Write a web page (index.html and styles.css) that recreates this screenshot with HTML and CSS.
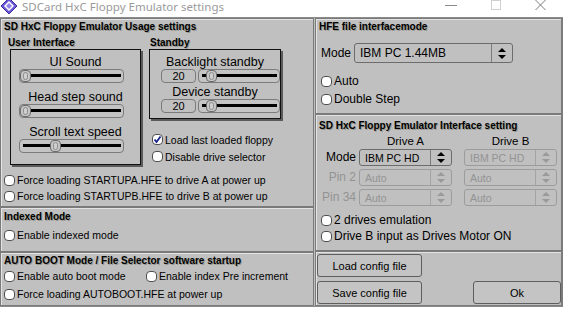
FILE: index.html
```html
<!DOCTYPE html>
<html lang="en">
<head>
    <meta charset="UTF-8">
    <title>SDCard HxC Floppy Emulator settings</title>
    <link rel="stylesheet" href="styles.css">
</head>
<body>
    <div class="titlebar">
        <svg class="appicon" width="16" height="16" viewBox="0 0 16 16">
            <polygon points="8,0 16,8 8,16 0,8" fill="#6a58d8" stroke="#3b2c9c" stroke-width="1"/>
            <polygon points="8,3 13,8 8,13 3,8" fill="#fff"/>
            <polygon points="8,5 11,8 8,11 5,8" fill="#8f82ea"/>
        </svg>
        <span class="wintitle">SDCard HxC Floppy Emulator settings</span>
        <div class="winbtns">
            <svg width="12" height="10" viewBox="0 0 12 10"><line x1="0" y1="5.5" x2="12" y2="5.5" stroke="#8a8a8a"/></svg>
            <svg width="10" height="10" viewBox="0 0 10 10"><rect x="0.5" y="0.5" width="9" height="9" fill="none" stroke="#d0d0d0"/></svg>
            <svg width="11" height="10" viewBox="0 0 11 10"><path d="M0.5 0 L10.5 10 M10.5 0 L0.5 10" stroke="#7a7a7a"/></svg>
        </div>
    </div>

    <div class="client">
        <div class="col col-left">
            <section class="panel p-usage">
                <h2 class="plabel">SD HxC Floppy Emulator Usage settings</h2>
                <div class="usage-row">
                    <div class="group ui-group">
                        <h3 class="glabel">User Interface</h3>
                        <div class="shadowbox uibox">
                            <div class="slabel">UI Sound</div>
                            <div class="slider ui-slider"><i class="knob" style="left:0px"></i></div>
                            <div class="slabel">Head step sound</div>
                            <div class="slider ui-slider"><i class="knob" style="left:0px"></i></div>
                            <div class="slabel">Scroll text speed</div>
                            <div class="slider ui-slider"><i class="knob" style="left:30px"></i></div>
                        </div>
                    </div>
                    <div class="group sb-group">
                        <h3 class="glabel">Standby</h3>
                        <div class="shadowbox sbbox">
                            <div class="slabel">Backlight standby</div>
                            <div class="numrow">
                                <span class="num">20</span>
                                <div class="slider sb-slider"><i class="knob" style="left:7px"></i></div>
                            </div>
                            <div class="slabel">Device standby</div>
                            <div class="numrow">
                                <span class="num">20</span>
                                <div class="slider sb-slider"><i class="knob" style="left:7px"></i></div>
                            </div>
                        </div>
                        <div class="sb-checks">
                            <label class="chk"><span class="box on"><svg width="9" height="9" viewBox="0 0 9 9"><path d="M1.5 4.5 L3.5 7 L7.5 1.5" fill="none" stroke="#16238a" stroke-width="1.8"/></svg></span>Load last loaded floppy</label>
                            <label class="chk"><span class="box"></span>Disable drive selector</label>
                        </div>
                    </div>
                </div>
                <div class="force-checks">
                    <label class="chk"><span class="box"></span>Force loading STARTUPA.HFE to drive A at power up</label>
                    <label class="chk"><span class="box"></span>Force loading STARTUPB.HFE to drive B at power up</label>
                </div>
            </section>

            <section class="panel p-indexed">
                <h2 class="plabel">Indexed Mode</h2>
                <label class="chk"><span class="box"></span>Enable indexed mode</label>
            </section>

            <section class="panel p-autoboot">
                <h2 class="plabel">AUTO BOOT Mode / File Selector software startup</h2>
                <div class="chkrow">
                    <label class="chk autoboot"><span class="box"></span>Enable auto boot mode</label>
                    <label class="chk"><span class="box"></span>Enable index Pre increment</label>
                </div>
                <label class="chk chk-tall"><span class="box"></span>Force loading AUTOBOOT.HFE at power up</label>
            </section>
        </div>

        <div class="col col-right">
            <section class="panel p-hfe">
                <h2 class="plabel">HFE file interfacemode</h2>
                <div class="moderow">
                    <span class="mlabel">Mode</span>
                    <div class="choice hfe-choice">
                        <span class="cv">IBM PC 1.44MB</span>
                        <span class="ca"><svg width="8" height="11" viewBox="0 0 8 11"><path d="M4 0 L8 4 L0 4 Z M0 7 L8 7 L4 11 Z" fill="#000"/></svg></span>
                    </div>
                </div>
                <div class="hfe-checks">
                    <label class="chk"><span class="box"></span>Auto</label>
                    <label class="chk"><span class="box"></span>Double Step</label>
                </div>
            </section>

            <section class="panel p-iface">
                <h2 class="plabel">SD HxC Floppy Emulator Interface setting</h2>
                <div class="drivegrid">
                    <span></span>
                    <span class="dhead">Drive A</span>
                    <span class="dhead">Drive B</span>

                    <span class="rlabel">Mode</span>
                    <div class="choice">
                        <span class="cv">IBM PC HD</span>
                        <span class="ca"><svg width="8" height="11" viewBox="0 0 8 11"><path d="M4 0 L8 4 L0 4 Z M0 7 L8 7 L4 11 Z" fill="#000"/></svg></span>
                    </div>
                    <div class="choice off">
                        <span class="cv">IBM PC HD</span>
                        <span class="ca"><svg width="8" height="11" viewBox="0 0 8 11"><path d="M4 0 L8 4 L0 4 Z M0 7 L8 7 L4 11 Z" fill="#9a9a9a"/></svg></span>
                    </div>

                    <span class="rlabel off">Pin 2</span>
                    <div class="choice off">
                        <span class="cv">Auto</span>
                        <span class="ca"><svg width="8" height="11" viewBox="0 0 8 11"><path d="M4 0 L8 4 L0 4 Z M0 7 L8 7 L4 11 Z" fill="#9a9a9a"/></svg></span>
                    </div>
                    <div class="choice off">
                        <span class="cv">Auto</span>
                        <span class="ca"><svg width="8" height="11" viewBox="0 0 8 11"><path d="M4 0 L8 4 L0 4 Z M0 7 L8 7 L4 11 Z" fill="#9a9a9a"/></svg></span>
                    </div>

                    <span class="rlabel off">Pin 34</span>
                    <div class="choice off">
                        <span class="cv">Auto</span>
                        <span class="ca"><svg width="8" height="11" viewBox="0 0 8 11"><path d="M4 0 L8 4 L0 4 Z M0 7 L8 7 L4 11 Z" fill="#9a9a9a"/></svg></span>
                    </div>
                    <div class="choice off">
                        <span class="cv">Auto</span>
                        <span class="ca"><svg width="8" height="11" viewBox="0 0 8 11"><path d="M4 0 L8 4 L0 4 Z M0 7 L8 7 L4 11 Z" fill="#9a9a9a"/></svg></span>
                    </div>
                </div>
                <div class="iface-checks">
                    <label class="chk"><span class="box"></span>2 drives emulation</label>
                    <label class="chk"><span class="box"></span>Drive B input as Drives Motor ON</label>
                </div>
            </section>

            <section class="panel p-buttons">
                <button class="btn btn-cfg" type="button">Load config file</button>
                <div class="btnrow">
                    <button class="btn btn-cfg" type="button">Save config file</button>
                    <button class="btn btn-ok" type="button">Ok</button>
                </div>
            </section>
        </div>
    </div>
</body>
</html>
```

FILE: styles.css
```css
body {
    margin: 0;
    width: 566px;
    height: 310px;
    overflow: hidden;
    background-color: #fff;
    font-family: "Liberation Sans", Arial, sans-serif;
    color: #000;
}
.titlebar {
    height: 17px;
    width: 563px;
    border-bottom: 1px solid #8c8c8c;
    display: flex;
    align-items: flex-start;
    background-color: #fff;
}
.appicon {
    margin: -2px 0 0 1px;
}
.wintitle {
    margin: 0 0 0 5px;
    font-family: "Noto Sans", sans-serif;
    font-size: 11.5px;
    line-height: 13px;
    color: #9a9a9a;
}
.winbtns {
    margin-left: auto;
    display: flex;
    gap: 34px;
    padding-right: 17px;
}
.client {
    display: flex;
    width: 562px;
    height: 288px;
    background-color: #c0c0c0;
    border-right: 1px solid #7c7c7c;
    border-bottom: 1px solid #8a8a8a;
}
.col {
    display: flex;
    flex-direction: column;
}
.col-left {
    width: 314px;
}
.col-right {
    width: 247px;
    margin-left: 1px;
}
.panel {
    box-sizing: border-box;
    border: 1px solid #7a7a7a;
    box-shadow: inset 1px 1px 0 #e4e4e4;
    display: flex;
    flex-direction: column;
}
.plabel {
    margin: 0;
    padding: 2px 0 0 3px;
    font-size: 10px;
    line-height: 12px;
    font-weight: bold;
    text-shadow: 1px 1px 0 rgba(70, 70, 40, 0.35);
}
.glabel {
    margin: 0;
    font-size: 10px;
    line-height: 12px;
    font-weight: bold;
    text-shadow: 1px 1px 0 rgba(70, 70, 40, 0.35);
}

/* left column */
.p-usage {
    height: 189px;
}
.usage-row {
    display: flex;
    margin-top: 4px;
}
.ui-group {
    margin-left: 7px;
    width: 133px;
}
.sb-group {
    margin-left: 8px;
}
.sb-group .glabel {
    padding-left: 1px;
}
.shadowbox {
    box-sizing: border-box;
    border: 1px solid #111;
    box-shadow: 2px 2px 0 #5a5a5a;
    display: flex;
    flex-direction: column;
}
.uibox {
    margin-left: 2px;
    width: 131px;
    height: 116px;
    padding-top: 5px;
}
.sbbox {
    width: 132px;
    height: 70px;
    padding-top: 5px;
}
.slabel {
    font-size: 12.5px;
    line-height: 14px;
    text-align: center;
}
.slider {
    position: relative;
    box-sizing: border-box;
    height: 14px;
    border: 1px solid #7b7b7b;
    border-radius: 4px;
    background-color: #c4c4c4;
}
.slider::before {
    content: "";
    position: absolute;
    left: 3px;
    right: 2px;
    top: 4px;
    height: 3px;
    background-color: #000;
}
.knob {
    position: absolute;
    top: 0;
    bottom: 0;
    width: 11px;
    box-sizing: border-box;
    border: 1px solid #6a6a6a;
    border-radius: 4px;
    background-color: #c6c6c6;
}
.knob::after {
    content: "";
    position: absolute;
    left: 2px;
    right: 2px;
    top: 1px;
    bottom: 1px;
    border: 1px solid #8c8c8c;
    border-radius: 3px;
    background-color: #cfcfcf;
}
.ui-slider {
    margin-left: 8px;
    width: 105px;
}
.ui-slider + .slabel {
    margin-top: 7px;
}
.numrow {
    display: flex;
    gap: 2px;
    padding-left: 11px;
}
.numrow + .slabel {
    margin-top: 2px;
}
.num {
    box-sizing: border-box;
    width: 35px;
    height: 14px;
    border: 1px solid #7b7b7b;
    border-radius: 4px;
    font-size: 11px;
    line-height: 12px;
    text-align: center;
}
.sb-slider {
    flex: 1;
}
.sb-checks {
    margin-top: 12px;
    padding-left: 3px;
}
.sb-checks .chk {
    height: 17px;
}
.force-checks {
    margin-top: 7px;
    padding-left: 3px;
}
.chk {
    display: flex;
    align-items: center;
    height: 16px;
    font-size: 10.5px;
    white-space: nowrap;
}
.box {
    box-sizing: border-box;
    width: 11px;
    height: 11px;
    margin-right: 2px;
    border: 1px solid #4f4f4f;
    border-radius: 4px;
    background-color: #fff;
    display: flex;
    align-items: center;
    justify-content: center;
}
.p-indexed {
    height: 45px;
}
.p-indexed .plabel {
    padding-top: 3px;
}
.p-indexed .chk {
    margin-top: 4px;
    padding-left: 3px;
}
.p-autoboot {
    flex: 1;
}
.chkrow {
    display: flex;
    padding-left: 3px;
}
.chkrow .chk {
    height: 18px;
}
.autoboot {
    width: 142px;
}
.chk-tall {
    height: 18px;
    padding-left: 3px;
}

/* right column */
.p-hfe {
    height: 96px;
}
.moderow {
    display: flex;
    align-items: center;
    margin-top: 10px;
    padding-left: 5px;
}
.mlabel {
    width: 33px;
    font-size: 12px;
}
.choice {
    box-sizing: border-box;
    display: flex;
    width: 93px;
    height: 17px;
    border: 1px solid #6c6c6c;
    border-radius: 3px;
    font-size: 10.5px;
}
.hfe-choice {
    width: 159px;
    height: 20px;
    font-size: 12px;
}
.cv {
    flex: 1;
    padding-left: 5px;
    display: flex;
    align-items: center;
    white-space: nowrap;
}
.ca {
    width: 20px;
    border-left: 1px solid #7c7c7c;
    display: flex;
    align-items: center;
    justify-content: center;
}
.choice.off {
    border-color: #9c9c9c;
    color: #939393;
}
.choice.off .ca {
    border-left-color: #a4a4a4;
}
.hfe-checks {
    margin-top: 9px;
    padding-left: 5px;
}
.hfe-checks .chk {
    height: 18px;
    font-size: 12px;
}
.p-iface {
    height: 137px;
}
.p-iface .plabel {
    padding-top: 5px;
}
.drivegrid {
    display: grid;
    grid-template-columns: 40px 93px 102px;
    column-gap: 3px;
    row-gap: 3px;
    margin-top: 2px;
}
.drivegrid > :nth-child(3n) {
    justify-self: end;
    width: 93px;
}
.dhead {
    font-size: 11.5px;
    line-height: 14px;
    text-align: center;
    margin-bottom: -2px;
}
.rlabel {
    font-size: 12px;
    text-align: right;
    line-height: 17px;
}
.rlabel.off {
    color: #939393;
}
.iface-checks {
    margin-top: 6px;
    padding-left: 5px;
}
.iface-checks .chk {
    font-size: 12px;
}
.p-buttons {
    flex: 1;
    padding: 2px 0 0 1px;
}
.btnrow {
    display: flex;
    justify-content: space-between;
    margin-top: 4px;
}
.btn {
    box-sizing: border-box;
    height: 23px;
    padding: 0;
    border: 1px solid #5e5e5e;
    border-radius: 3px;
    background-color: #c4c4c4;
    font-family: "Liberation Sans", Arial, sans-serif;
    font-size: 11px;
    color: #000;
}
.btn-cfg {
    width: 105px;
}
.btn-ok {
    width: 88px;
}
```
